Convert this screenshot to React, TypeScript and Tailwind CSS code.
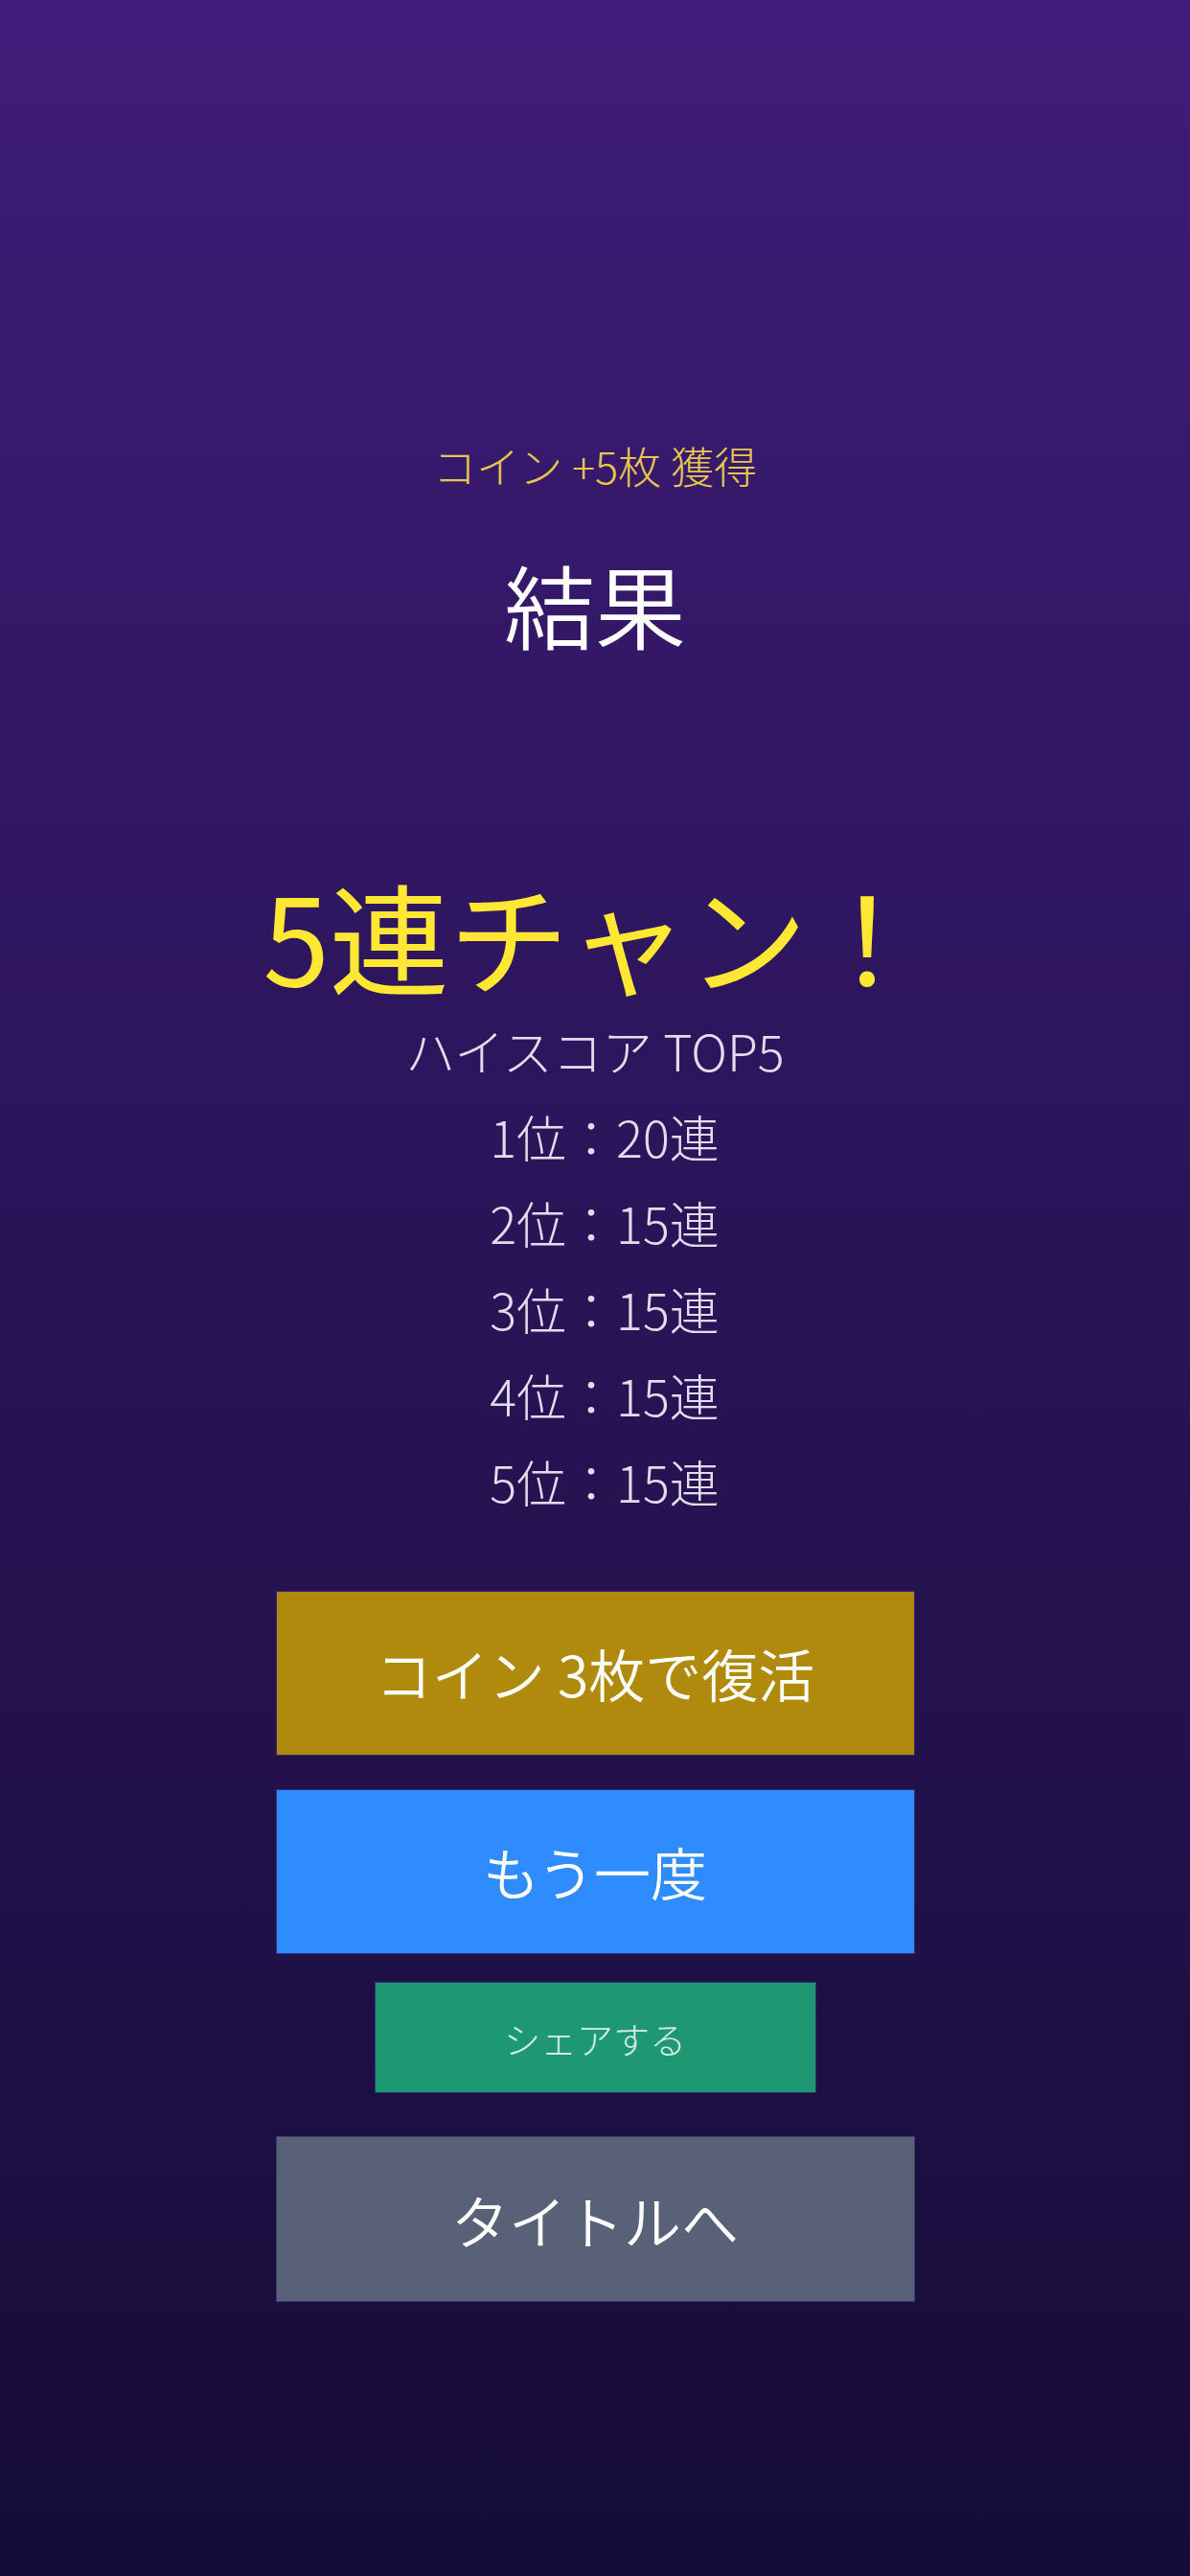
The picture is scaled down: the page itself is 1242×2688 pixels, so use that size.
import React from "react";

const ranks = [
  { rank: 1, score: 20 },
  { rank: 2, score: 15 },
  { rank: 3, score: 15 },
  { rank: 4, score: 15 },
  { rank: 5, score: 15 },
];

export default function App() {
  return (
    <div className="flex min-h-[2688px] w-full flex-col items-center bg-gradient-to-b from-[#3f1c79] to-[#150c37] pt-[456px] text-center font-['Noto_Sans_CJK_JP','Noto_Sans',sans-serif] font-light">
      <div className="h-[60px] text-[45px] leading-[60px] text-[#e8c64e]">
        コイン +5枚 獲得
      </div>
      <h1 className="mt-[54px] h-[120px] text-[95px] font-[350] leading-[120px] text-white">
        結果
      </h1>
      <div className="mt-[210px] h-[150px] text-[125px] font-normal leading-[150px] text-[#ffe733]">
        5連チャン！
      </div>
      <div className="mt-px h-[90px] text-[52px] leading-[90px] text-[#e2dcec]">
        ハイスコア TOP5
      </div>
      {ranks.map((r) => (
        <div
          key={r.rank}
          className="h-[90px] pl-[20px] text-[52px] leading-[90px] text-[#e2dcec]"
        >
          {r.rank}位：{r.score}連
        </div>
      ))}
      <button className="mt-[69px] flex h-[172px] w-[667px] items-center justify-center border border-[#3a2470] bg-[#b08a0c] text-[59px] font-[350] text-white">
        コイン 3枚で復活
      </button>
      <button className="mt-[35px] flex h-[172px] w-[667px] items-center justify-center border border-[#3a2c8a] bg-[#2e8cff] text-[59px] font-[350] text-white">
        もう一度
      </button>
      <button className="mt-[29px] flex h-[116px] w-[461px] items-center justify-center border border-[#2a3a6a] bg-[#1d9872] text-[38px] text-[#d4ece3]">
        シェアする
      </button>
      <button className="mt-[45px] flex h-[173px] w-[667px] items-center justify-center border border-[#3e3b6e] bg-[#596179] text-[60px] font-[350] text-white">
        タイトルへ
      </button>
    </div>
  );
}
